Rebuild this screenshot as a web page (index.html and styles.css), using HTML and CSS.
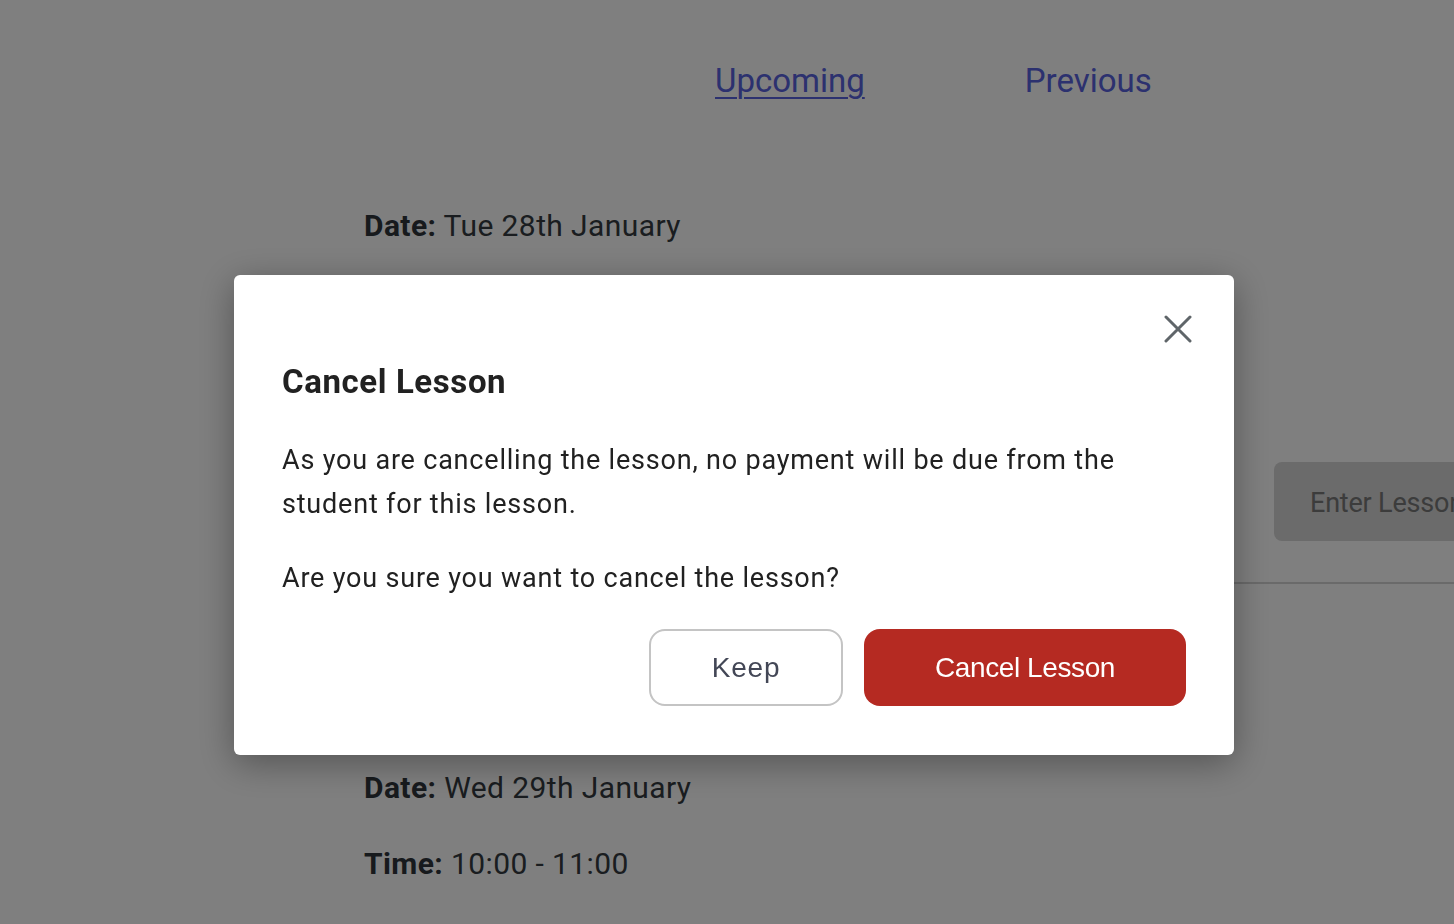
FILE: index.html
```html
<!DOCTYPE html>
<html lang="en">
<head>
<meta charset="utf-8">
<title>Lessons</title>
<link rel="stylesheet" href="styles.css">
</head>
<body>
<div class="page">
  <nav class="tabs">
    <a class="tab tab-active" href="#">Upcoming</a>
    <a class="tab" href="#">Previous</a>
  </nav>
  <div class="lessons">
    <div class="lesson lesson-first">
      <div class="details">
        <p class="row"><b>Date:</b> Tue 28th January</p>
      </div>
      <button class="enter-btn">Enter Lesson</button>
    </div>
    <div class="lesson lesson-second">
      <div class="details">
        <p class="row"><b>Date:</b> Wed 29th January</p>
        <p class="row"><b>Time:</b> 10:00 - 11:00</p>
      </div>
    </div>
  </div>
</div>

<div class="overlay">
  <div class="modal" role="dialog">
    <button class="close" aria-label="Close">
      <svg width="28" height="28" viewBox="0 0 28 28"><path d="M2 2 L26 26 M26 2 L2 26" stroke="#5f6569" stroke-width="3" stroke-linecap="round" fill="none"/></svg>
    </button>
    <h2 class="modal-title">Cancel Lesson</h2>
    <p class="modal-text">As you are cancelling the lesson, no payment will be due from the student for this lesson.</p>
    <p class="modal-text modal-question">Are you sure you want to cancel the lesson?</p>
    <div class="actions">
      <button class="btn btn-keep">Keep</button>
      <button class="btn btn-cancel">Cancel Lesson</button>
    </div>
  </div>
</div>
</body>
</html>
```

FILE: styles.css
```css
html, body {
  margin: 0;
  padding: 0;
  background: #ffffff;
  overflow: hidden;
  height: 100%;
}
body {
  font-family: Roboto, "Liberation Sans", sans-serif;
  color: #343a40;
}
.page {
  width: 100%;
  overflow: hidden;
}
.tabs {
  display: flex;
  padding: 57px 0 0 715px;
  gap: 160px;
  height: 47px;
}
.tab {
  font-size: 33px;
  line-height: 48px;
  color: #5862de;
  text-decoration: none;
}
.tab-active {
  text-decoration: underline;
  text-underline-offset: 5px;
  text-decoration-thickness: 2px;
}
.lessons {
  padding-left: 364px;
}
.lesson {
  display: flex;
  justify-content: space-between;
  border-bottom: 2px solid #d4d4d4;
}
.lesson-first {
  padding-top: 102px;
}
.lesson-second {
  padding-top: 184px;
  border-bottom: none;
}
.details {
  width: 910px;
  flex: none;
}
.lesson-first .details {
  padding-bottom: 300px;
}
.row {
  margin: 0 0 36px;
  font-size: 30px;
  line-height: 40px;
  letter-spacing: 0.4px;
  white-space: nowrap;
}
.row b {
  font-weight: 700;
  color: #2f353b;
}
.enter-btn {
  flex: none;
  align-self: flex-end;
  margin-bottom: 41px;
  width: 260px;
  height: 79px;
  border: none;
  border-radius: 8px;
  background: #d6d6d6;
  color: #787878;
  font-family: Roboto, "Liberation Sans", sans-serif;
  font-size: 27px;
  letter-spacing: -0.2px;
  text-align: left;
  padding: 2px 0 0 36px;
  white-space: nowrap;
}
.overlay {
  position: fixed;
  inset: 0;
  background: rgba(0, 0, 0, 0.5);
  padding: 275px 0 0 234px;
}
.modal {
  position: relative;
  width: 1000px;
  height: 480px;
  box-sizing: border-box;
  background: #ffffff;
  border-radius: 6px;
  box-shadow: 0 8px 36px rgba(0, 0, 0, 0.35);
  padding: 81px 48px 48px;
  color: #212121;
}
.close {
  position: absolute;
  top: 39px;
  right: 41px;
  width: 30px;
  height: 30px;
  padding: 1px;
  border: none;
  background: none;
  display: flex;
  align-items: center;
  justify-content: center;
}
.modal-title {
  margin: 0;
  font-size: 33px;
  line-height: 52px;
  font-weight: 700;
  letter-spacing: 0.6px;
}
.modal-text {
  margin: 30px 0 0;
  font-size: 27px;
  line-height: 44px;
  letter-spacing: 0.8px;
  width: 890px;
}
.modal-question {
  margin-top: 30px;
}
.actions {
  display: flex;
  justify-content: flex-end;
  gap: 21px;
  margin-top: 29px;
}
.btn {
  height: 77px;
  border-radius: 16px;
  font-family: "Liberation Sans", Arial, sans-serif;
  font-size: 28px;
  box-sizing: border-box;
  padding: 0;
}
.btn-keep {
  width: 194px;
  background: #ffffff;
  border: 2px solid #c4c4c4;
  color: #434756;
  letter-spacing: 0.8px;
}
.btn-cancel {
  width: 322px;
  background: #b52a22;
  border: none;
  color: #ffffff;
  letter-spacing: -0.4px;
}
```
